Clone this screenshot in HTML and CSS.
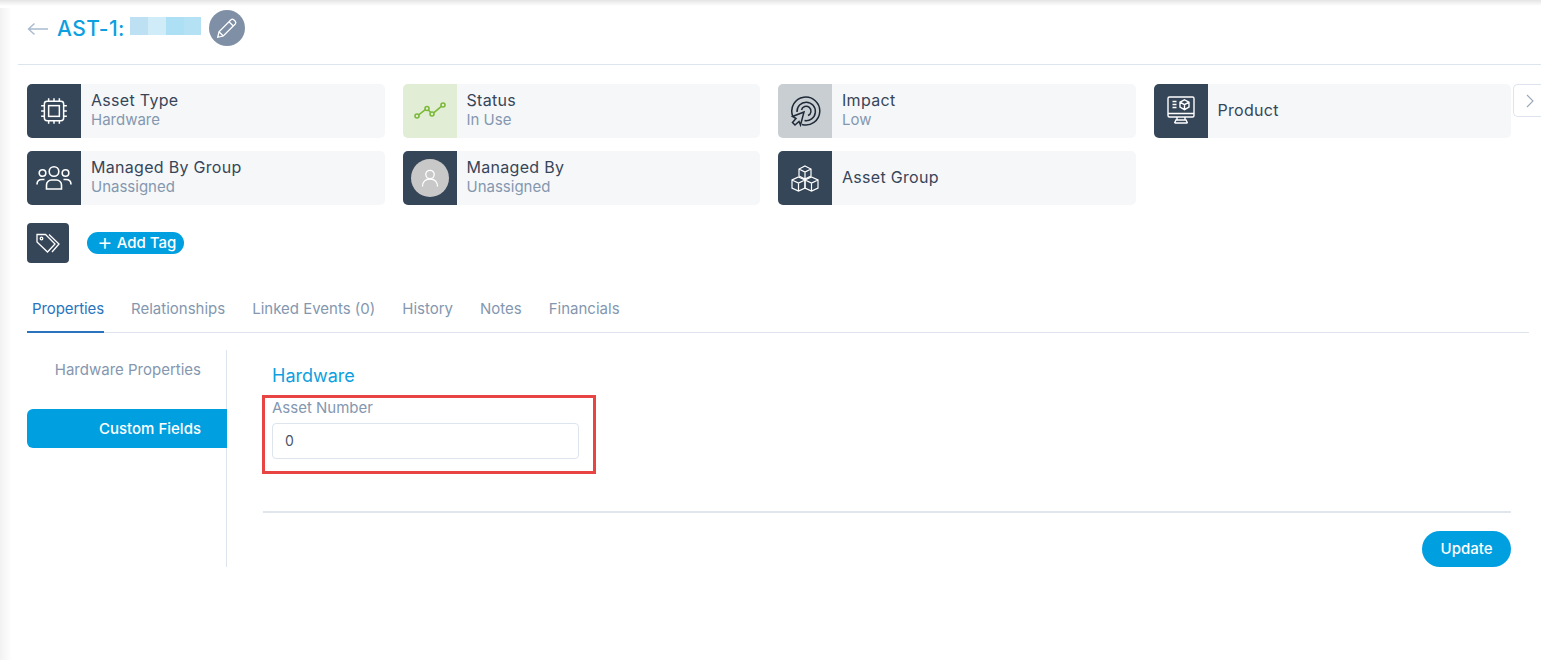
FILE: index.html
```html
<!DOCTYPE html>
<html lang="en">
<head>
<meta charset="utf-8">
<title>AST-1</title>
<link rel="stylesheet" href="styles.css">
</head>
<body>
<div class="page">
  <header class="head">
    <svg class="back" viewBox="0 0 22 14" fill="none"><path d="M21 7H1.5M7.5 1.5 1.5 7l6 5.5"/></svg>
    <h1 class="title">AST-1:</h1>
    <div class="redact"><i class="r1"></i><i class="r2"></i><i class="r3"></i><i class="r4"></i></div>
    <button class="edit" aria-label="Edit">
      <svg viewBox="0 0 20 20" fill="none"><path d="M3 17l1-4.4L13.6 3a1.6 1.6 0 0 1 2.2 0l1.2 1.2a1.6 1.6 0 0 1 0 2.2L7.4 16z"/><path d="M12 4.6l3.4 3.4M4 12.6 7.400 16"/></svg>
    </button>
  </header>

  <section class="cards">
    <div class="card">
      <div class="ic">
        <svg viewBox="0 0 28 28" fill="none"><rect x="5" y="5" width="18" height="18" rx="2.500"/><rect x="9" y="9" width="10" height="10"/><path d="M9 2V5M14 2V5M19 2V5M9 23v3M14 23v3M19 23v3M2 9H5M2 14H5M2 19H5M23 9h3M23 14h3M23 19h3"/></svg>
      </div>
      <div class="txt"><b>Asset Type</b><span>Hardware</span></div>
    </div>
    <div class="card">
      <div class="ic ic-green">
        <svg class="trend" viewBox="0 0 32 18" fill="none"><circle cx="3" cy="14" r="2"/><circle cx="13" cy="6.500" r="2"/><circle cx="18" cy="12" r="2"/><circle cx="29" cy="3" r="2"/><path d="M4.600 12.800 11.400 7.700M14.300 8 16.700 10.500M19.600 10.800 27.400 4.300"/></svg>
      </div>
      <div class="txt"><b>Status</b><span>In Use</span></div>
    </div>
    <div class="card">
      <div class="ic ic-grey">
        <svg class="dark" viewBox="0 0 32 32" fill="none"><path d="M3.700 21A14 14 0 1 1 13 29.500"/><path d="M8 17a9.200 9.200 0 1 1 7.500 8.500"/><path d="M12.500 15a4.800 4.800 0 1 1 6.500 5.500"/><path d="M15 17 3.500 21.500l3.500 2-3.500 4 2.500 2.500 4-3.500 1.500 3.500z"/></svg>
      </div>
      <div class="txt"><b>Impact</b><span>Low</span></div>
    </div>
    <div class="card">
      <div class="ic">
        <svg viewBox="0 2 30 30" fill="none"><rect x="2" y="3" width="26" height="20" rx="1.500"/><path d="M2 19.500h26M11 23v3M19 23v3M8.500 29h13M8.500 29l1.500-3h10l1.500 3M6.500 7.500h4M6.500 10.500h4M6.500 13.500h4"/><path d="M18.500 5.800l4.500 2.400v5l-4.500 2.400-4.500-2.400v-5zM14 8.200l4.500 2.400 4.500-2.400M18.500 10.600v5"/></svg>
      </div>
      <div class="txt"><b>Product</b></div>
    </div>
    <button class="next" aria-label="Next">
      <svg viewBox="0 0 10 16" fill="none"><path d="M2 2l6 6-6 6"/></svg>
    </button>

    <div class="card">
      <div class="ic">
        <svg class="group" viewBox="0 0 36 26" fill="none"><circle cx="18" cy="6.500" r="4.800"/><circle cx="6.500" cy="8" r="3.300"/><circle cx="29.500" cy="8" r="3.300"/><path d="M10.500 24v-4a5 5 0 0 1 5-5h5a5 5 0 0 1 5 5v4z"/><path d="M1 19.500c0-3 2-5 5-5h2.500M35 19.500c0-3-2-5-5-5h-2.500"/></svg>
      </div>
      <div class="txt"><b>Managed By Group</b><span>Unassigned</span></div>
    </div>
    <div class="card">
      <div class="ic">
        <div class="avatar">
          <svg viewBox="0 0 20 20" fill="none"><circle cx="10" cy="6.500" r="4.200"/><path d="M2.500 18.500c0-4.500 3-7.500 7.500-7.500s7.500 3 7.500 7.500"/></svg>
        </div>
      </div>
      <div class="txt"><b>Managed By</b><span>Unassigned</span></div>
    </div>
    <div class="card">
      <div class="ic">
        <svg class="cubes" viewBox="0 0 30 30" fill="none"><path d="M15 3l6 3v7l-6 3-6-3V6zM9 6l6 3 6-3M15 9v7"/><path d="M8.500 14l6.500 3v8l-6.500 3L2 25v-8zM2 17l6.500 3 6.500-3M8.500 20v8"/><path d="M21.500 14l6.500 3v8l-6.500 3L15 25v-8zM15 17l6.500 3 6.500-3M21.500 20v8"/></svg>
      </div>
      <div class="txt"><b>Asset Group</b></div>
    </div>
  </section>

  <section class="tags">
    <div class="tagicon">
      <svg viewBox="0 0 26 22" fill="none"><path d="M2 2.500h8.500L20 12l-7.500 8L2 10z"/><circle cx="6.500" cy="6.500" r="1.300"/><path d="M14 2.500 24 12l-7 8"/></svg>
    </div>
    <button class="addtag"><span class="plus">+</span>Add Tag</button>
  </section>

  <nav class="tabs">
    <a class="tab active">Properties</a>
    <a class="tab">Relationships</a>
    <a class="tab">Linked Events (0)</a>
    <a class="tab">History</a>
    <a class="tab">Notes</a>
    <a class="tab">Financials</a>
  </nav>

  <section class="body">
    <aside class="side">
      <div class="side-item">Hardware Properties</div>
      <div class="side-item current">Custom Fields</div>
    </aside>
    <main class="content">
      <h2 class="sect">Hardware</h2>
      <div class="field">
        <label class="lbl">Asset Number</label>
        <div class="input">0</div>
      </div>
      <div class="rule"></div>
      <div class="actions"><button class="update">Update</button></div>
    </main>
  </section>
</div>
</body>
</html>
```
FILE: styles.css
```css
* { box-sizing: border-box; }
html, body { margin: 0; height: 100%; }
body {
  background: #fff;
  font-family: "Inter", "Liberation Sans", sans-serif;
  color: #364659;
  overflow: hidden;
}
.page {
  height: 660px;
  padding-left: 18px;
  background:
    linear-gradient(to bottom, #e4e4e4, #fff 6px) top left / 100% 8px no-repeat,
    linear-gradient(to right, #f2f2f2, #fff 12px) top left / 14px 100% no-repeat,
    #fff;
}
.head {
  height: 65px;
  padding: 10px 0 0 9px;
  display: flex;
  align-items: flex-start;
  border-bottom: 1px solid #dde4ee;
}
.back { width: 22px; height: 14px; margin: 12px 8px 0 0; }
.back path { stroke: #a9bad0; stroke-width: 1.4; }
.title {
  margin: 1px 0 0;
  font-size: 21px;
  font-weight: 500;
  line-height: 36px;
  color: #0d9fe0;
  letter-spacing: .4px;
}
.redact { display: flex; margin: 7px 8px 0 5px; height: 18px; }
.redact i { display: block; width: 18px; }
.redact .r4 { width: 17px; }
.r1 { background: #bde0f2; }
.r2 { background: #d0ecf8; }
.r3 { background: #aee0f5; }
.r4 { background: #b5e1f5; }
.edit {
  width: 36px; height: 36px;
  padding: 0;
  border: 0;
  border-radius: 50%;
  background: #7f90a6;
  display: flex; align-items: center; justify-content: center;
}
.edit svg { width: 25px; height: 25px; }
.edit path { stroke: #fff; stroke-width: 1; }

.cards {
  position: relative;
  margin: 19px 30px 0 9px;
  display: grid;
  grid-template-columns: repeat(4, 1fr);
  column-gap: 18px;
  row-gap: 13px;
}
.card {
  height: 54px;
  display: flex;
  background: #f6f7f9;
  border-radius: 5px;
  overflow: hidden;
}
.ic {
  flex: 0 0 54px;
  background: #364659;
  display: flex; align-items: center; justify-content: center;
}
.ic svg { width: 30px; height: 30px; stroke: #fff; stroke-width: 1.400; }
.ic svg.cubes { stroke-width: 1.200; }
.ic svg.group { width: 36px; height: 26px; stroke-width: 1.600; }
.ic svg.dark { width: 32px; height: 32px; stroke: #1e2a38; stroke-width: 1.500; }
.ic svg.trend { width: 32px; height: 18px; stroke: #7cb93a; stroke-width: 1.600; }
.ic-green { background: #e1edd4; }
.ic-grey { background: #c9ced2; }
.avatar {
  width: 38px; height: 38px;
  border-radius: 50%;
  background: #c8c8c8;
  display: flex; align-items: center; justify-content: center;
}
.avatar svg { width: 20px; height: 20px; stroke-width: 1.300; }
.txt {
  padding: 0 0 2px 10px;
  display: flex; flex-direction: column; justify-content: center;
}
.txt b {
  font-weight: 400;
  font-size: 16px;
  line-height: 19px;
  letter-spacing: .3px;
  color: #364659;
}
.txt span {
  font-size: 15px;
  line-height: 19px;
  color: #8497af;
}
.next {
  position: absolute;
  right: -30px; top: 0;
  width: 28px; height: 33px;
  padding: 0 0 0 5px;
  background: #fff;
  border: 1px solid #dde4ee;
  border-radius: 5px 0 0 5px;
  border-right: 0;
  display: flex; align-items: center; justify-content: center;
}
.next svg { width: 10px; height: 16px; }
.next path { stroke: #9aa8ba; stroke-width: 1.100; }

.tags {
  margin: 18px 0 0 9px;
  height: 40px;
  display: flex;
  align-items: center;
  gap: 18px;
}
.tagicon {
  width: 42px; height: 40px;
  background: #364659;
  border-radius: 4px;
  display: flex; align-items: center; justify-content: center;
}
.tagicon svg { width: 26px; height: 22px; stroke: #fff; stroke-width: 1.300; }
.addtag {
  width: 97px; height: 22px;
  padding: 0 0 2px 10px;
  border: 0;
  border-radius: 11px;
  background: #009fdf;
  color: #fff;
  font: 500 15px "Inter", "Liberation Sans", sans-serif;
  display: flex; align-items: center; gap: 4px;
}
.plus { font-size: 24px; font-weight: 300; line-height: 20px; }

.tabs {
  margin: 28px 12px 0 9px;
  height: 42px;
  display: flex;
  gap: 27px;
  border-bottom: 1px solid #dde4ee;
}
.tab {
  font-size: 15px;
  line-height: 36px;
  color: #8497af;
  white-space: nowrap;
}
.tab.active {
  padding-left: 5px;
  height: 42px;
  color: #2a74bd;
  letter-spacing: -.1px;
  border-bottom: 2px solid #2a74bd;
}

.body {
  margin: 17px 30px 0 9px;
  display: flex;
}
.side {
  flex: 0 0 200px;
  min-width: 0;
  height: 217px;
  border-right: 1px solid #dde4ee;
}
.side-item {
  height: 39px;
  width: 174px;
  text-align: right;
  font-size: 15px;
  line-height: 39px;
  color: #8497af;
}
.side-item.current {
  margin-top: 20px;
  width: 200px;
  padding-right: 26px;
  background: #009fdf;
  color: #fff;
  font-weight: 500;
  border-radius: 6px 0 0 6px;
}
.content { flex: 1; padding-left: 36px; }
.sect {
  margin: 13px 0 0 9px;
  font-size: 18px;
  font-weight: 400;
  line-height: 25px;
  color: #0d9fe0;
}
.field {
  margin: 7px 0 0 -1px;
  width: 334px;
  height: 79px;
  padding: 1px 0 0 7px;
  border: 3px solid #e84444;
}
.lbl {
  display: block;
  font-size: 15px;
  line-height: 18px;
  color: #8497af;
}
.input {
  margin-top: 6px;
  width: 307px;
  height: 36px;
  padding-left: 12px;
  border: 1px solid #dde4ee;
  border-radius: 4px;
  font-size: 14px;
  line-height: 34px;
  color: #4a5666;
}
.rule {
  margin-top: 37px;
  height: 2px;
  background: #e1e5ec;
}
.actions { margin-top: 18px; display: flex; justify-content: flex-end; }
.update {
  width: 89px; height: 36px;
  padding: 0 0 1px;
  border: 0;
  border-radius: 18px;
  background: #009fdf;
  color: #fff;
  font: 500 15px "Inter", "Liberation Sans", sans-serif;
}
```
